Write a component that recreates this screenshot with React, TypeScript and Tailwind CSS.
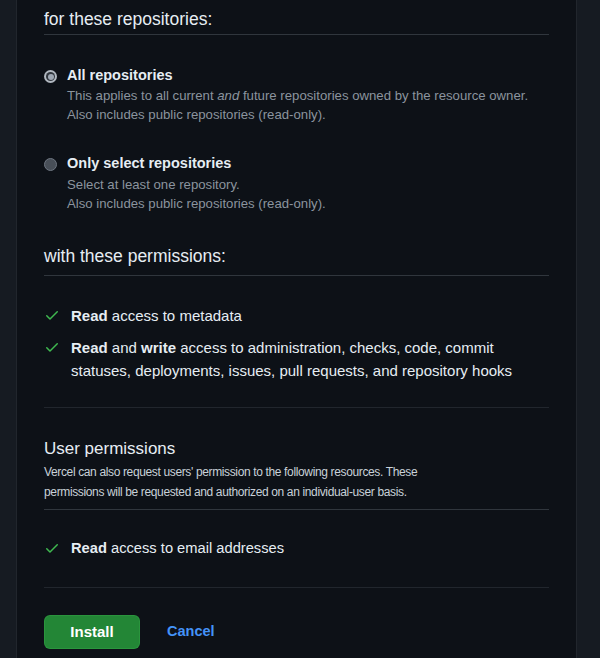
import React from 'react';

const Check = () => (
  <svg viewBox="0 0 16 16" className="w-4 h-4 shrink-0 mt-[3px] fill-[#3fb950]">
    <path d="M13.78 4.22a.75.75 0 0 1 0 1.06l-7.25 7.25a.75.75 0 0 1-1.06 0L2.22 9.28a.751.751 0 0 1 .018-1.042.751.751 0 0 1 1.042-.018L6 10.94l6.72-6.72a.75.75 0 0 1 1.06 0Z" />
  </svg>
);

const Radio: React.FC<{ checked?: boolean }> = ({ checked }) =>
  checked ? (
    <span className="w-[13px] h-[13px] rounded-full bg-[#b1b8c0] flex items-center justify-center shrink-0 mt-[5px]">
      <span className="w-[9px] h-[9px] rounded-full bg-[#30363d] flex items-center justify-center">
        <span className="w-[6px] h-[6px] rounded-full bg-[#9ea7b3] block"></span>
      </span>
    </span>
  ) : (
    <span className="w-[13px] h-[13px] rounded-full bg-[#484f58] border border-[#6e7681] block shrink-0 mt-[5px]"></span>
  );

export default function App() {
  return (
    <div
      className="w-[600px] h-[658px] bg-[#161b22] flex overflow-hidden"
      style={{ fontFamily: '"Liberation Sans", Arial, sans-serif' }}
    >
      <div className="ml-[16px] w-[561px] h-full bg-[#0d1117] border-x border-[#21262d] pl-[27px] pr-[27px] text-[#e6edf3]">
        {/* repositories */}
        <div className="text-[17.5px] leading-[20px] pt-[9px] pb-[5px]">for these repositories:</div>
        <div className="border-t border-[#30363d]"></div>

        <div className="flex gap-[10px] mt-[30px]">
          <Radio checked />
          <div>
            <div className="text-[14.5px] font-bold leading-[20px]">All repositories</div>
            <div className="text-[13.2px] text-[#8b949e] leading-[19px] mt-[1px]">
              This applies to all current <em>and</em> future repositories owned by the resource owner.
              <br />
              Also includes public repositories (read-only).
            </div>
          </div>
        </div>

        <div className="flex gap-[10px] mt-[29px]">
          <Radio />
          <div>
            <div className="text-[14.5px] font-bold leading-[20px]">Only select repositories</div>
            <div className="text-[13.2px] text-[#8b949e] leading-[19px] mt-[2px]">
              Select at least one repository.
              <br />
              Also includes public repositories (read-only).
            </div>
          </div>
        </div>

        {/* permissions */}
        <div className="text-[17.5px] leading-[20px] mt-[33px] pb-[9px]">with these permissions:</div>
        <div className="border-t border-[#30363d]"></div>

        <div className="flex flex-col gap-[9px] mt-[28px] text-[15px] leading-[23px]">
          <div className="flex gap-[11px]">
            <Check />
            <div>
              <b>Read</b> access to metadata
            </div>
          </div>
          <div className="flex gap-[11px]">
            <Check />
            <div>
              <b>Read</b> and <b>write</b> access to administration, checks, code, commit
              <br />
              statuses, deployments, issues, pull requests, and repository hooks
            </div>
          </div>
        </div>

        <div className="border-t border-[#21262d] mt-[25px]"></div>

        {/* user permissions */}
        <div className="text-[17px] leading-[22px] mt-[30px]">User permissions</div>
        <div className="text-[12px] tracking-[-0.03em] text-[#c9d1d9] leading-[20px] mt-[2px]">
          Vercel can also request users' permission to the following resources. These
          <br />
          permissions will be requested and authorized on an individual-user basis.
        </div>
        <div className="border-t border-[#30363d] mt-[7px]"></div>

        <div className="flex gap-[11px] mt-[27px] text-[14.7px] leading-[23px]">
          <Check />
          <div>
            <b>Read</b> access to email addresses
          </div>
        </div>

        <div className="border-t border-[#21262d] mt-[27px]"></div>

        <div className="flex items-center gap-[27px] mt-[27px]">
          <button className="w-[96px] h-[34px] rounded-[6px] bg-[#238636] border border-[#2ea043]/60 text-white text-[15px] font-bold">
            Install
          </button>
          <button className="text-[#4493f8] text-[14.5px] font-bold">Cancel</button>
        </div>
      </div>
    </div>
  );
}
